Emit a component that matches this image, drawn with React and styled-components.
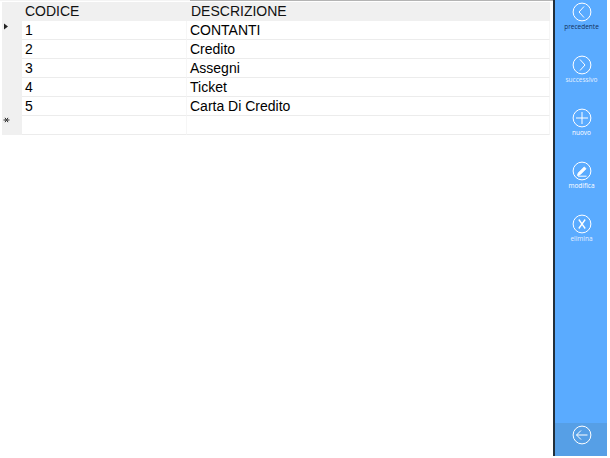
import React from "react";
import styled, { createGlobalStyle } from "styled-components";

const GlobalStyle = createGlobalStyle`
  html, body {
    margin: 0;
    padding: 0;
    background: #ffffff;
    font-family: "Liberation Sans", Arial, sans-serif;
  }
`;

const Page = styled.div`
  width: 610px;
  height: 458px;
  display: flex;
  background: #ffffff;
  overflow: hidden;
`;

const GridArea = styled.div`
  width: 553px;
  height: 456px;
  flex-shrink: 0;
`;

const TopEdge = styled.div`
  height: 1px;
  margin-bottom: 1px;
  background: linear-gradient(to right, #f4f4f4 190px, #b4b4b4 190px);
`;

const Row = styled.div`
  display: grid;
  grid-template-columns: 20px 165px 363px;
  width: 548px;
  height: 19px;
  margin-left: 2px;
`;

const HeaderRow = styled(Row)`
  background: #f0f0f0;
`;

const RowHead = styled.div`
  background: #f0f0f0;
  padding: ${(p) => p.$top}px 0 0 1px;
  box-sizing: border-box;
  display: flex;
  align-items: flex-start;
`;

const HeadCell = styled.div`
  font-size: 14px;
  line-height: 18px;
  color: #111111;
  padding-left: ${(p) => p.$pad}px;
`;

const Cell = styled.div`
  font-size: 14px;
  line-height: 18px;
  color: #000000;
  padding-left: 3px;
  border-bottom: 1px solid #ececec;
  border-right: 1px solid #f6f6f6;
  box-sizing: border-box;
  height: 19px;
`;

const Sidebar = styled.div`
  width: 54px;
  height: 456px;
  flex-shrink: 0;
  border-left: 2px solid #22303c;
  box-sizing: border-box;
  background: #5aabff;
  display: flex;
  flex-direction: column;
`;

const Actions = styled.div`
  flex: 1;
  display: flex;
  flex-direction: column;
  align-items: center;
  padding: 2px 0 0 1px;
  gap: 10px;
`;

const Action = styled.div`
  width: 51px;
  height: 43px;
  display: flex;
  flex-direction: column;
  align-items: center;
  color: ${(p) => p.$color || "#ffffff"};
`;

const ActionLabel = styled.span`
  font-family: "Open Sans", "Liberation Sans", sans-serif;
  font-size: 6.5px;
  font-weight: 400;
  line-height: 8px;
  margin-top: 1px;
  white-space: nowrap;
`;

const BackBar = styled.div`
  height: 33px;
  background: #569fe6;
  padding: 2px 0 0 1px;
  box-sizing: border-box;
  display: flex;
  align-items: flex-start;
  justify-content: center;
`;

const Ring = ({ children }) => (
  <svg width="20" height="20" viewBox="0 0 20 20" fill="none" stroke="#ffffff" strokeWidth="1">
    <circle cx="10" cy="10" r="8.9" />
    {children}
  </svg>
);

const CurrentMark = () => (
  <svg width="6" height="7" viewBox="0 0 6 7">
    <path d="M1 0.5 L5 3.5 L1 6.5 Z" fill="#222222" />
  </svg>
);

const NewMark = () => (
  <svg width="7" height="6" viewBox="0 0 7 6" fill="none" stroke="#333333" strokeWidth="1">
    <path d="M0.5 3 H6.5 M2 0.8 L5 5.2 M5 0.8 L2 5.2" />
  </svg>
);

const actions = [
  { label: "precedente", color: "#12315c", icon: <path d="M12 4.5 L7 10 L12 15.5" /> },
  { label: "successivo", color: "#e4f0ff", icon: <path d="M8 4.5 L13 10 L8 15.5" /> },
  { label: "nuovo", icon: <path d="M10 4 V16 M4 10 H16" /> },
  {
    label: "modifica",
    icon: (
      <>
        <path d="M5.5 14.5 L6.3 12 L12.3 6 L14 7.7 L8 13.7 Z" fill="#ffffff" />
        <path d="M6 15.2 H14.5" />
      </>
    ),
  },
  { label: "elimina", color: "#e4f0ff", icon: <path d="M6.8 5.5 L13.2 14.5 M13.2 5.5 L6.8 14.5" strokeWidth="1.3" /> },
];

const rows = [
  { id: "1", name: "CONTANTI", mark: <CurrentMark />, top: 2 },
  { id: "2", name: "Credito" },
  { id: "3", name: "Assegni" },
  { id: "4", name: "Ticket" },
  { id: "5", name: "Carta Di Credito" },
  { id: "", name: "", mark: <NewMark />, top: 1 },
];

const App = () => {
  return (
    <Page>
      <GlobalStyle />
      <GridArea>
        <TopEdge />
        <HeaderRow>
          <RowHead />
          <HeadCell $pad={3}>CODICE</HeadCell>
          <HeadCell $pad={4}>DESCRIZIONE</HeadCell>
        </HeaderRow>
        {rows.map((r) => (
          <Row key={r.id + r.name}>
            <RowHead $top={r.top || 0}>{r.mark}</RowHead>
            <Cell>{r.id}</Cell>
            <Cell>{r.name}</Cell>
          </Row>
        ))}
      </GridArea>
      <Sidebar>
        <Actions>
          {actions.map((a) => (
            <Action key={a.label} $color={a.color}>
              <Ring>{a.icon}</Ring>
              <ActionLabel>{a.label}</ActionLabel>
            </Action>
          ))}
        </Actions>
        <BackBar>
          <Ring>
            <path d="M9 5.5 L4.5 10 L9 14.5 M4.5 10 H15.5" />
          </Ring>
        </BackBar>
      </Sidebar>
    </Page>
  );
};

export default App;
